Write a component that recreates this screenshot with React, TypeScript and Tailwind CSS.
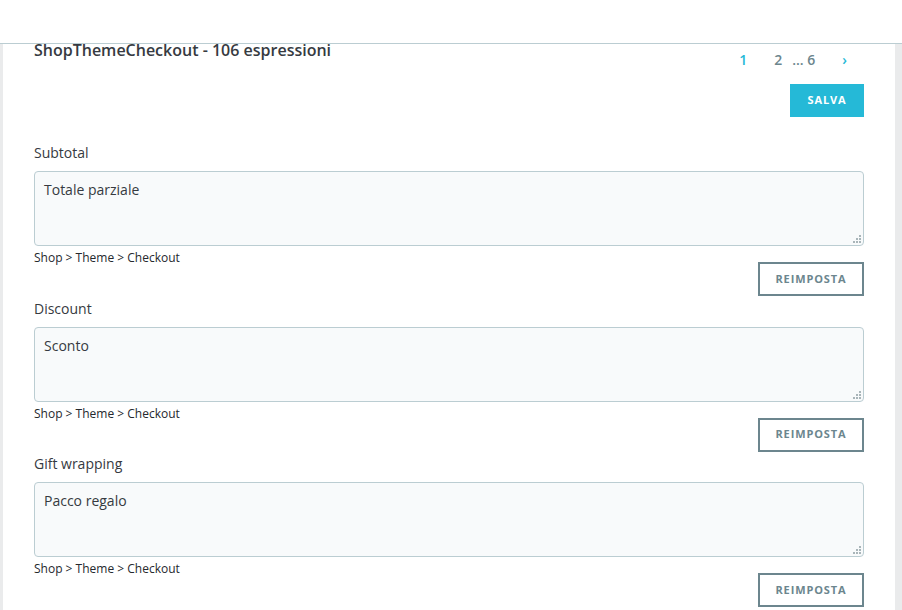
import React from "react";

const items = [
  { key: "Subtotal", value: "Totale parziale" },
  { key: "Discount", value: "Sconto" },
  { key: "Gift wrapping", value: "Pacco regalo" },
];

function Grip() {
  // the dotted resize grip in the textarea corner
  const dots = [
    [6, 0],
    [3, 3],
    [6, 3],
    [0, 6],
    [3, 6],
    [6, 6],
  ];
  return (
    <svg
      width="8"
      height="8"
      viewBox="0 0 8 8"
      className="pointer-events-none absolute bottom-[3px] right-[3px]"
    >
      {dots.map(([x, y], i) => (
        <rect key={i} x={x} y={y} width="2" height="2" fill="#a9b5b9" />
      ))}
    </svg>
  );
}

function Expression({ label, value }: { label: string; value: string }) {
  return (
    <div className="flex flex-col">
      <label className="mb-2 text-[14px] leading-5 text-[#363a41]">{label}</label>
      <div className="relative">
        <textarea
          defaultValue={value}
          className="block h-[75px] w-full resize-none rounded border border-[#bbcdd2] bg-[#f8fafb] px-[9px] py-[8px] text-[14px] leading-5 text-[#363a41] outline-none"
        />
        <Grip />
      </div>
      <div className="flex items-start justify-between">
        <span className="mt-[4px] text-[12px] leading-4 text-[#25282d]">
          Shop &gt; Theme &gt; Checkout
        </span>
        <button className="mt-4 h-[34px] w-[106px] border-2 border-[#6c868e] bg-white text-[11px] font-bold tracking-[0.08em] text-[#6c868e]">
          REIMPOSTA
        </button>
      </div>
    </div>
  );
}

export default function App() {
  return (
    <div
      className="flex h-[610px] w-[902px] flex-col overflow-hidden bg-[#eaebec]"
      style={{ fontFamily: '"Open Sans", "Liberation Sans", sans-serif' }}
    >
      <header className="h-[44px] shrink-0 border-b border-[#bbcdd2] bg-white" />
      <main className="ml-[3px] mr-[7px] flex flex-1 flex-col bg-white px-[31px]">
        <div className="flex items-start justify-between">
          <h1 className="-mt-[4px] text-[16px] font-semibold leading-5 text-[#363a41]">
            ShopThemeCheckout - 106 espressioni
          </h1>
          <div className="flex flex-col items-end">
            <nav className="mt-[6px] flex items-center pr-[17px] text-[14px] font-semibold leading-5 text-[#6c868e]">
              <span className="text-[#25b9d7]">1</span>
              <span className="ml-[27px]">2</span>
              <span className="ml-[10px]">... 6</span>
              <span className="ml-[27px] text-[#25b9d7]">›</span>
            </nav>
            <button className="mt-[14px] h-[33px] w-[74px] bg-[#25b9d7] text-[11px] font-bold tracking-[0.08em] text-white">
              SALVA
            </button>
          </div>
        </div>
        <div className="mt-[26px] flex flex-col gap-[2.6px]">
          {items.map((it) => (
            <Expression key={it.key} label={it.key} value={it.value} />
          ))}
        </div>
      </main>
    </div>
  );
}
